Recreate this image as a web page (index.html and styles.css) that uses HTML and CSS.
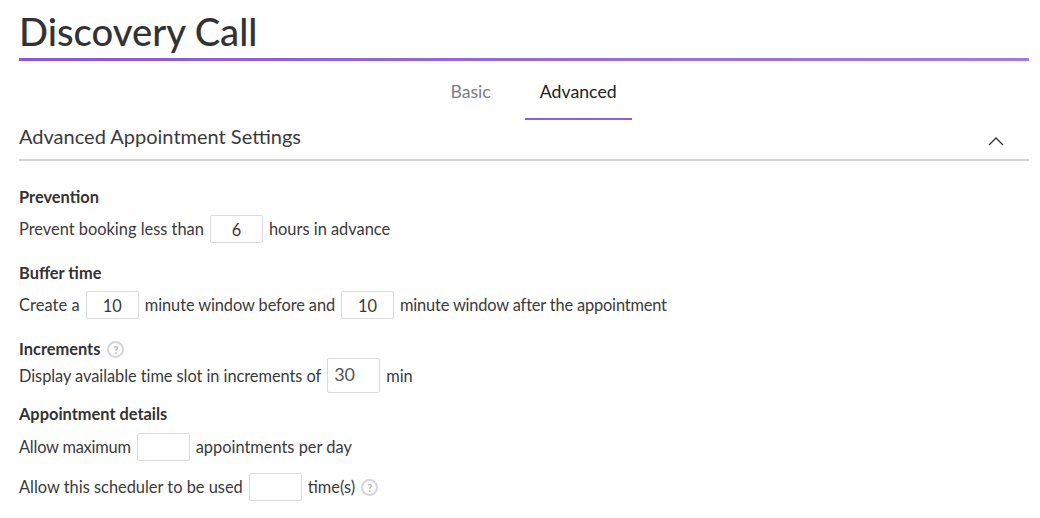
FILE: index.html
```html
<!DOCTYPE html>
<html lang="en">
<head>
<meta charset="utf-8">
<title>Discovery Call</title>
<link rel="stylesheet" href="styles.css">
</head>
<body>
<main class="page">
  <h1 class="title">Discovery Call</h1>
  <nav class="tabs">
    <a class="tab">Basic</a>
    <a class="tab tab-active">Advanced</a>
  </nav>
  <header class="section-head">
    <h2 class="section-title">Advanced Appointment Settings</h2>
    <svg class="chevron" width="16" height="10" viewBox="0 0 16 10"><path d="M1 9l7-7 7 7" fill="none" stroke="#333" stroke-width="1.3"/></svg>
  </header>
  <section class="group g-prevention">
    <h3 class="label">Prevention</h3>
    <div class="row"><span>Prevent booking less than</span><input class="field" value="6"><span>hours in advance</span></div>
  </section>
  <section class="group g-buffer">
    <h3 class="label">Buffer time</h3>
    <div class="row"><span class="wide">Create a</span><input class="field" value="10"><span class="close">minute window before and</span><input class="field" value="10"><span class="tight">minute window after the appointment</span></div>
  </section>
  <section class="group g-increments">
    <h3 class="label">Increments <span class="help">?</span></h3>
    <div class="row"><span class="snug">Display available time slot in increments of</span><input class="field field-tall" value="30"><span>min</span></div>
  </section>
  <section class="group g-details">
    <h3 class="label">Appointment details</h3>
    <div class="row"><span class="tighter">Allow maximum</span><input class="field"><span>appointments per day</span></div>
    <div class="row row-next"><span>Allow this scheduler to be used</span><input class="field"><span>time(s)</span><span class="help">?</span></div>
  </section>
</main>
</body>
</html>
```
FILE: styles.css
```css
* { box-sizing: border-box; }
html, body { margin: 0; background: #fff; }
body { font-family: Lato, "Open Sans", sans-serif; color: #3a3a3c; font-size: 16px; overflow: hidden; }
.page { padding: 0 11px 0 19px; height: 518px; }
.title { margin: 0; height: 61px; padding-top: 10px; font-size: 38.2px; line-height: 42px; font-weight: 500; color: #333; border-bottom: 3px solid; border-image: linear-gradient(90deg, #8a58d6, #a27ae0) 1; }
.tabs { display: flex; justify-content: center; height: 59px; padding-left: 19px; }
.tab { display: block; padding: 21px 15px 0; line-height: 20px; font-size: 17.7px; color: #7a7d84; height: 59px; margin-right: 19px; }
.tab-active { color: #222; border-bottom: 2px solid #8d5fd8; margin-right: 0; }
.section-head { display: flex; justify-content: space-between; align-items: center; height: 41px; border-bottom: 2px solid #d3d6d9; padding-right: 25px; }
.section-title { margin: 0; font-size: 20px; font-weight: 400; color: #3a3a3c; position: relative; top: -4px; }
.chevron { margin-top: 2px; }
.label { margin: 0; font-size: 16.4px; line-height: 20px; font-weight: 700; color: #333; display: flex; align-items: center; gap: 7px; }
.g-prevention { padding-top: 26px; }
.g-buffer { padding-top: 20px; }
.g-increments { padding-top: 20px; }
.g-details { padding-top: 11px; }
.row { display: flex; align-items: center; gap: 6px; line-height: 20px; font-size: 16.4px; }
.wide { letter-spacing: 0.1px; }
.close { letter-spacing: -0.1px; }
.tight { letter-spacing: -0.17px; }
.tighter { letter-spacing: -0.22px; }
.snug { letter-spacing: -0.06px; }
.g-prevention .row, .g-buffer .row { margin-top: 8px; }
.g-details .row { margin-top: 9px; }
.g-details .row-next { margin-top: 12px; }
.g-increments .row { margin-top: -1px; }
.field { width: 53px; height: 28px; border: 1px solid #d9dbde; border-radius: 2px; padding: 0; text-align: center; font: inherit; color: #3a3a3c; background: #fff; outline: none; }
.field-tall { height: 35px; text-align: left; padding: 0 0 3px 6px; font-size: 18px; color: #555; }
.help { display: inline-flex; align-items: center; justify-content: center; width: 17px; height: 17px; border: 2px solid #d3d5d8; border-radius: 50%; font-size: 11px; line-height: 1; font-weight: 700; color: #b5b7ba; }
```
